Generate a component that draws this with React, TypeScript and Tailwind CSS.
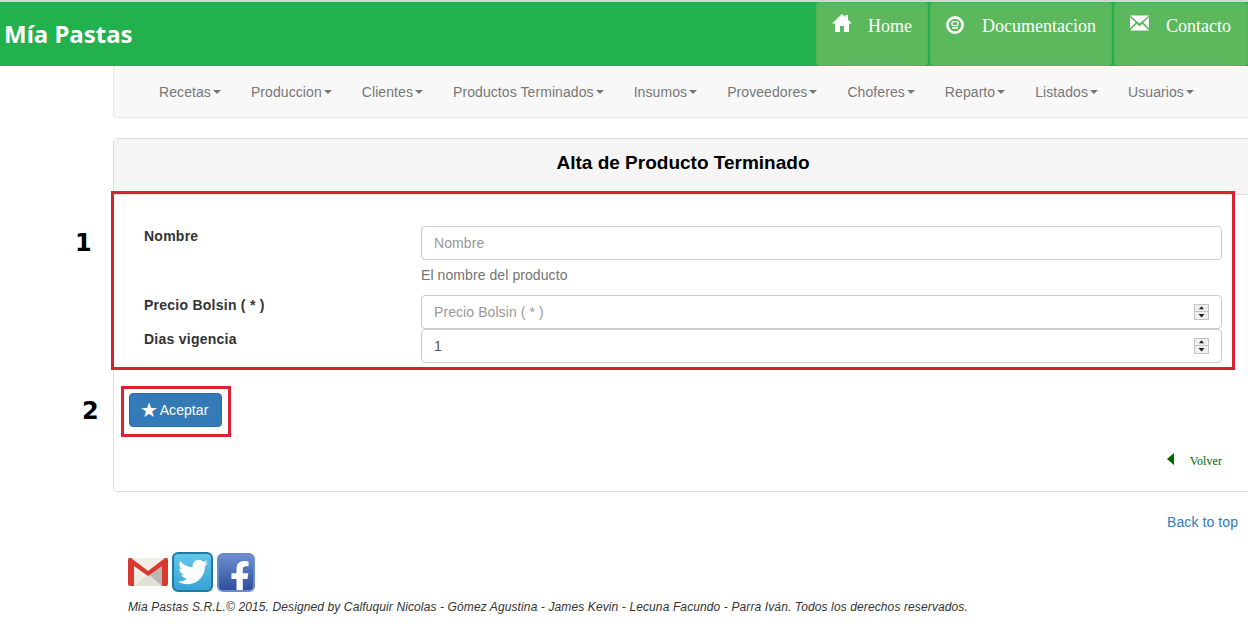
import { FaFacebookF, FaTwitter } from "react-icons/fa";

const menu = [
  "Recetas",
  "Produccion",
  "Clientes",
  "Productos Terminados",
  "Insumos",
  "Proveedores",
  "Choferes",
  "Reparto",
  "Listados",
  "Usuarios",
];

function HomeIcon() {
  return (
    <svg width="20" height="18" viewBox="0 0 20 18" className="fill-white">
      <path d="M10 0 L13.5 3.3 L13.5 1 L16 1 L16 5.7 L20 9.5 L17 9.5 L17 18 L12 18 L12 12 L8 12 L8 18 L3 18 L3 9.5 L0 9.5 Z" />
    </svg>
  );
}

function RegisteredIcon() {
  return (
    <svg width="18" height="18" viewBox="0 0 18 18" fill="none" stroke="white">
      <circle cx="9" cy="9" r="7.6" strokeWidth="2.6" />
      <rect x="6" y="5.6" width="6" height="4" rx="1.5" strokeWidth="1.4" />
      <path d="M6 12 H12" strokeWidth="1.5" />
    </svg>
  );
}

function MailIcon() {
  return (
    <svg width="19" height="16" viewBox="0 0 20 16" className="fill-white">
      <path d="M0 0 H20 L10 8.5 Z" />
      <path d="M0 2 L6 7.5 L0 13.5 Z" />
      <path d="M20 2 L14 7.5 L20 13.5 Z" />
      <path d="M0 16 L7 9 L10 11.3 L13 9 L20 16 Z" />
    </svg>
  );
}

function Spinner() {
  return (
    <div className="absolute right-[13px] top-[9px] flex h-4 w-[15px] flex-col border border-[#c4c4c4] bg-[#efefef]">
      <svg width="13" height="7" viewBox="0 0 13 7" className="border-b border-[#c4c4c4]">
        <path d="M6.5 1.5 L9.5 5 L3.5 5 Z" fill="#222" />
      </svg>
      <svg width="13" height="7" viewBox="0 0 13 7">
        <path d="M3.5 2 L9.5 2 L6.5 5.5 Z" fill="#222" />
      </svg>
    </div>
  );
}

function GmailLogo() {
  return (
    <svg width="40" height="30" viewBox="0 0 40 30">
      <rect x="1" y="1" width="38" height="28" fill="#f1eee6" />
      <path d="M6 29 L20 17 L34 29 Z" fill="#e3e0d8" />
      <path d="M34 7 L20 17 L34 29 Z" fill="#b9b7b0" />
      <path d="M0 3 Q0 0 3 1 L20 14 L37 1 Q40 0 40 3 V27 Q40 29 38 29 H34 V9 L20 19 L6 9 V29 H2 Q0 29 0 27 Z" fill="#d9382e" />
    </svg>
  );
}

export default function App() {
  return (
    <div className="h-[633px] w-full overflow-hidden bg-white font-['Liberation_Sans',sans-serif] text-sm tracking-[0.08px] text-[#333]">
      {/* Top bar */}
      <header className="flex h-[66px] items-stretch justify-between border-t-2 border-[#d4d4d4] bg-[#23b14d]">
        <h1 className="pl-1 pt-[18px] font-['Noto_Sans',sans-serif] text-2xl leading-[28px] font-bold tracking-normal text-white">
          Mía Pastas
        </h1>
        <nav className="flex gap-0.5 font-['Liberation_Serif',serif] text-lg tracking-normal text-white">
          <a className="flex w-[112px] items-start rounded border border-[#55b355] bg-[#5cb85c] pl-[15px] pt-[10px]">
            <span className="mt-px"><HomeIcon /></span>
            <span className="ml-4 leading-[26px]">Home</span>
          </a>
          <a className="flex w-[182px] items-start rounded border border-[#55b355] bg-[#5cb85c] pl-[15px] pt-[10px]">
            <span className="mt-[3px]"><RegisteredIcon /></span>
            <span className="ml-[18px] leading-[26px]">Documentacion</span>
          </a>
          <a className="flex w-[134px] items-start rounded border border-[#55b355] bg-[#5cb85c] pl-[15px] pt-[10px]">
            <span className="mt-[2px]"><MailIcon /></span>
            <span className="ml-[17px] leading-[26px]">Contacto</span>
          </a>
        </nav>
      </header>

      <main className="ml-[113px] w-[1140px]">
        {/* Menu */}
        <ul className="flex h-[52px] items-center rounded-b border border-t-0 border-[#e7e7e7] bg-[#f8f8f8] pl-[30px] text-[#777]">
          {menu.map((item) => (
            <li key={item} className="flex items-center px-[15px]">
              {item}
              <span className="ml-0.5 h-0 w-0 border-x-4 border-t-4 border-x-transparent border-t-[#777]" />
            </li>
          ))}
        </ul>

        {/* Panel */}
        <section className="relative mt-5 h-[354px] rounded border border-[#ddd] bg-white">
          <h2 className="flex h-[56px] items-center justify-center border-b border-[#ddd] bg-[#f5f5f5] pb-2 text-[19px] font-bold tracking-normal text-black">
            Alta de Producto Terminado
          </h2>

          <form className="ml-[30px] mr-[30px] mt-[31px]">
            <div className="grid grid-cols-[277px_1fr]">
              <label className="font-bold tracking-[0.25px]">Nombre</label>
              <div>
                <input
                  placeholder="Nombre"
                  className="block h-[34px] w-full rounded border border-[#ccc] bg-white px-3 placeholder:text-[#999]"
                />
                <p className="mb-2 mt-[5px] h-[22px] leading-[20px] text-[#737373]">El nombre del producto</p>
              </div>
              <label className="font-bold tracking-[0.25px]">Precio Bolsin ( * )</label>
              <div className="relative">
                <input
                  placeholder="Precio Bolsin ( * )"
                  className="block h-[34px] w-full rounded border border-[#ccc] bg-white px-3 placeholder:text-[#999]"
                />
                <Spinner />
              </div>
              <label className="font-bold tracking-[0.25px]">Dias vigencia</label>
              <div className="relative">
                <input
                  defaultValue="1"
                  className="block h-[34px] w-full rounded border border-[#ccc] bg-white px-3 text-[#555]"
                />
                <Spinner />
              </div>
            </div>
          </form>

          <button className="ml-[15px] mt-[30px] flex h-[34px] w-[93px] items-center justify-center gap-[2px] rounded border border-[#2e6da4] bg-[#337ab7] pr-[3px] text-white">
            <span className="text-xl leading-none">★</span>
            Aceptar
          </button>

          <div className="mr-[30px] mt-[19px] flex h-[24px] items-center justify-end gap-4 font-['Liberation_Serif',serif] text-xs text-[#006400]">
            <span className="mt-[2px] h-0 w-0 border-y-[6px] border-r-[7px] border-y-transparent border-r-[#006400]" />
            <span className="mt-[6px]">Volver</span>
          </div>

          {/* Annotations */}
          <div className="pointer-events-none absolute left-[-3px] top-[52px] h-[179px] w-[1124px] border-[3px] border-[#d9222f]" />
          <div className="pointer-events-none absolute left-[7px] top-[247px] h-[51px] w-[110px] border-[3px] border-[#d9222f]" />
          <span className="absolute left-[-39px] top-[90px] font-['DejaVu_Sans',sans-serif] text-2xl leading-[28px] font-bold tracking-normal text-black">1</span>
          <span className="absolute left-[-32px] top-[258px] font-['DejaVu_Sans',sans-serif] text-2xl leading-[28px] font-bold tracking-normal text-black">2</span>
        </section>

        <p className="mr-[15px] mt-5 text-right text-[#337ab7]">Back to top</p>

        <footer className="ml-[15px] mt-5">
          <div className="flex items-center gap-1">
            <GmailLogo />
            <div className="flex h-10 w-[41px] items-center justify-center rounded-md border-2 border-[#20799f] bg-gradient-to-b from-[#62c6ec] to-[#36a3d6]">
              <FaTwitter className="text-[30px] text-white" />
            </div>
            <div className="flex h-[39px] w-[38px] items-end justify-end overflow-hidden rounded-md border-2 border-[#6b8ccb] bg-gradient-to-b from-[#6d8fce] to-[#2f4e9c]">
              <FaFacebookF className="mb-[-3px] mr-[-3px] text-[32px] text-white" />
            </div>
          </div>
          <p className="mt-[7px] text-xs italic tracking-[0.115px] text-[#333]">
            Mia Pastas S.R.L.© 2015. Designed by Calfuquir Nicolas - Gómez Agustina - James Kevin - Lecuna Facundo - Parra Iván. Todos los derechos reservados.
          </p>
        </footer>
      </main>
    </div>
  );
}
